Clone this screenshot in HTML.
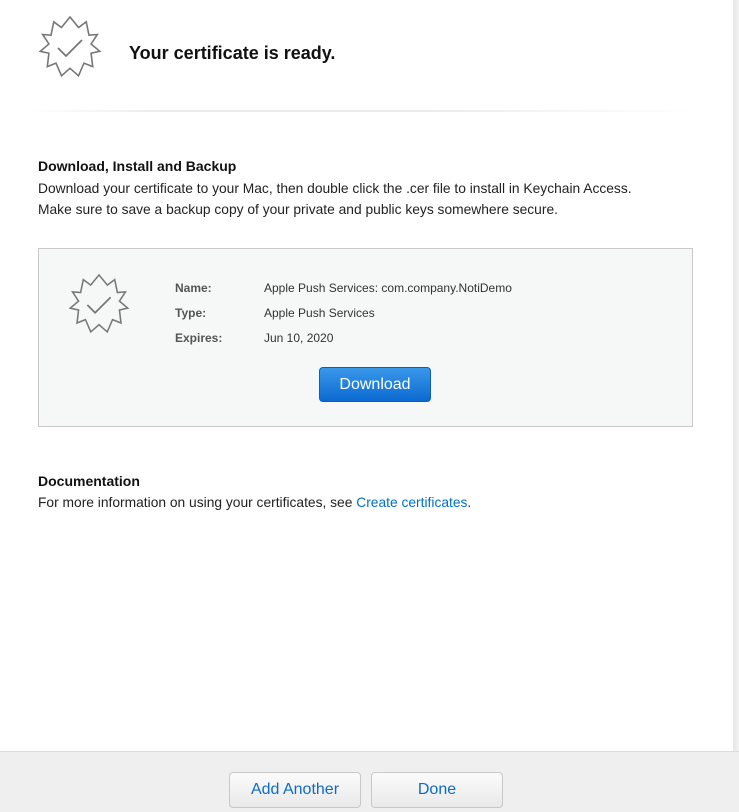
<!DOCTYPE html>
<html><head><meta charset="utf-8"><style>
*{margin:0;padding:0;box-sizing:border-box}
body{width:739px;height:812px;background:#fff;font-family:"Liberation Sans",Arial,sans-serif;color:#111;position:relative;overflow:hidden}
.edge{position:absolute;left:733px;top:0;width:6px;height:751px;background:linear-gradient(90deg,#e6e6e6,#f2f2f2)}
.star{position:absolute}
h1{position:absolute;left:129px;top:43px;font-size:18px;font-weight:bold}
.hr{position:absolute;left:30px;top:110px;width:665px;height:2px;background:linear-gradient(90deg,#fff,#ebebeb 20%,#ebebeb 60%,#fff)}
h2{position:absolute;left:38px;font-size:14px;font-weight:bold}
p{position:absolute;left:38px;font-size:13.8px;line-height:21px;color:#222}
.box{position:absolute;left:38px;top:248px;width:655px;height:179px;background:#f6f7f7;border:1px solid #c9c9c9}
.lbl{position:absolute;left:136px;font-size:12px;font-weight:bold;color:#555}
.val{position:absolute;left:225px;font-size:12px;color:#333}
.dl{position:absolute;left:280px;top:118px;width:112px;height:35px;border-radius:4px;background:linear-gradient(#3a98ea,#0b6ad0);border:1px solid #0a5fb8;color:#fff;font-size:16px;text-align:center;line-height:33px}
a{color:#0070c9;text-decoration:none}
.foot{position:absolute;left:0;top:751px;width:739px;height:61px;background:#efefef;border-top:1px solid #dcdcdc}
.btn{position:absolute;top:20px;width:132px;height:36px;border:1px solid #c8c8c8;border-radius:4px;background:linear-gradient(#fbfbfb,#e9e9e9);color:#0b6cc8;font-size:16px;text-align:center;line-height:34px}
</style></head><body>
<div class="edge"></div>
<svg class="star" style="left:38px;top:15px" width="64" height="64" viewBox="-32 -32 64 64"><polygon fill="none" stroke="#777" stroke-width="1.6" points="0,-30 8.6,-19.5 16.2,-25.2 19,-11.8 27.3,-12.5 21.1,-3 29.7,4.3 21.1,6.2 22.7,19.6 14,16.1 8.5,28.8 0,21.3 -8.5,28.8 -14,16.1 -22.7,19.6 -21.1,6.2 -29.7,4.3 -21.1,-3 -27.3,-12.5 -19,-11.8 -16.2,-25.2 -8.6,-19.5"/><polyline fill="none" stroke="#777" stroke-width="1.8" points="-12,1 -4,9 12,-7"/></svg>
<h1>Your certificate is ready.</h1>
<div class="hr"></div>
<h2 style="top:158px">Download, Install and Backup</h2>
<p style="top:178px">Download your certificate to your Mac, then double click the .cer file to install in Keychain Access.<br>Make sure to save a backup copy of your private and public keys somewhere secure.</p>
<div class="box">
<svg class="star" style="left:29px;top:24px" width="62" height="62" viewBox="-32 -32 64 64"><polygon fill="none" stroke="#777" stroke-width="1.6" points="0,-30 8.6,-19.5 16.2,-25.2 19,-11.8 27.3,-12.5 21.1,-3 29.7,4.3 21.1,6.2 22.7,19.6 14,16.1 8.5,28.8 0,21.3 -8.5,28.8 -14,16.1 -22.7,19.6 -21.1,6.2 -29.7,4.3 -21.1,-3 -27.3,-12.5 -19,-11.8 -16.2,-25.2 -8.6,-19.5"/><polyline fill="none" stroke="#777" stroke-width="1.8" points="-12,1 -4,9 12,-7"/></svg>
<div class="lbl" style="top:32px">Name:</div><div class="val" style="top:32px">Apple Push Services: com.company.NotiDemo</div>
<div class="lbl" style="top:57px">Type:</div><div class="val" style="top:57px">Apple Push Services</div>
<div class="lbl" style="top:82px">Expires:</div><div class="val" style="top:82px">Jun 10, 2020</div>
<div class="dl">Download</div>
</div>
<h2 style="top:473px">Documentation</h2>
<p style="top:492px">For more information on using your certificates, see <a>Create certificates</a>.</p>
<div class="foot">
<div class="btn" style="left:229px">Add Another</div>
<div class="btn" style="left:371px">Done</div>
</div>
</body></html>
